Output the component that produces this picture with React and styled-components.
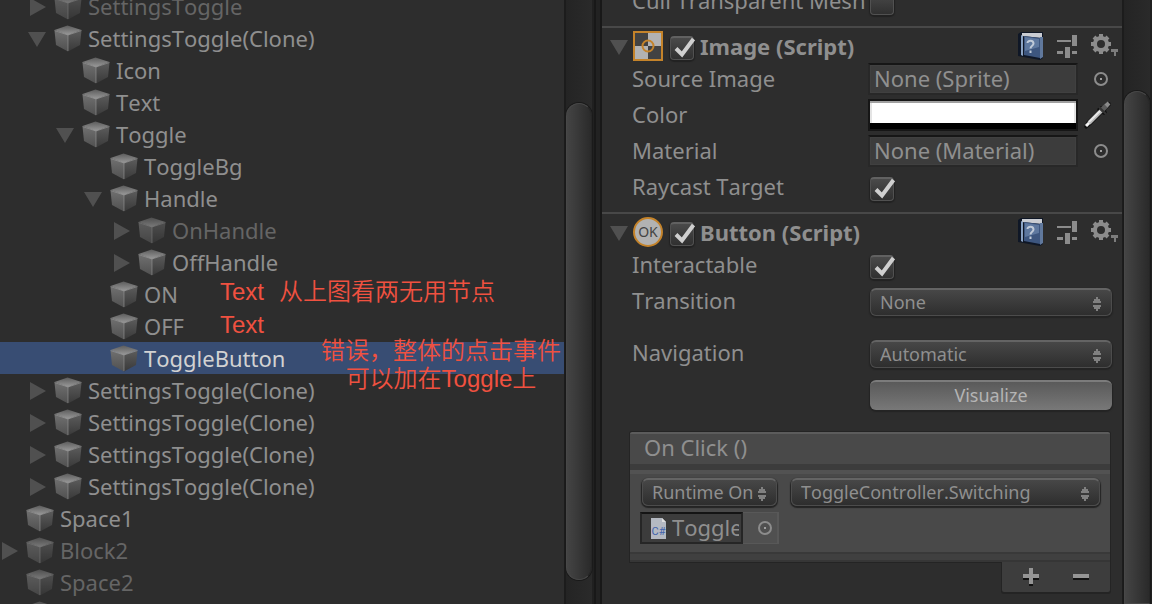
import React, { useId, useState } from "react";
import styled, { createGlobalStyle, css } from "styled-components";

const Global = createGlobalStyle`
  * { box-sizing: border-box; }
  body {
    margin: 0;
    background: #2d2d2d;
    color: #8f8f8f;
    font: 22px/32px "Noto Sans", "Noto Sans CJK SC", sans-serif;
    font-kerning: none;
  }
  button, input, select { font: inherit; font-kerning: inherit; color: inherit; margin: 0; }
`;

const bare = css`
  appearance: none;
  border: 0;
  padding: 0;
  background: none;
`;

const Editor = styled.main`
  display: grid;
  grid-template-columns: 564fr 30px 8px 520fr 30px;
  height: 100vh;
  overflow: hidden;
`;

/* ---------- hierarchy ---------- */

const Hierarchy = styled.section`
  position: relative;
  overflow: hidden;
  min-width: 0;
`;

const Tree = styled.ul`
  list-style: none;
  margin: -10px 0 0;
  padding: 0;
`;

const TreeRow = styled.li`
  display: flex;
  align-items: center;
  height: 32px;
  padding-left: ${(p) => p.$depth * 28}px;
  white-space: nowrap;
  color: ${(p) => (p.$selected ? "#d2d2d2" : p.$dim ? "#656565" : "#8f8f8f")};
  background: ${(p) => (p.$selected ? "#384d73" : "transparent")};
`;

const Fold = styled.button`
  ${bare}
  display: block;
  width: 18px;
  height: 18px;
  margin-top: 2px;
  svg { display: block; }
`;

const FoldSlot = styled.span`
  flex: none;
  width: 26px;
`;

const CubeSvg = styled.svg`
  flex: none;
  margin: 1px 6px 0 0;
  opacity: ${(p) => (p.$dim ? 0.7 : 1)};
`;

const Note = styled.p`
  position: absolute;
  margin: 0;
  left: ${(p) => p.$x}px;
  top: ${(p) => p.$y}px;
  color: #f05140;
  font: 24px/28px "Liberation Sans", "Noto Sans CJK SC", sans-serif;
  font-kerning: normal;
  font-weight: ${(p) => (p.$light ? 350 : 400)};
  text-align: center;
  white-space: pre;
`;

/* ---------- scroll bars ---------- */

const Track = styled.div`
  display: grid;
  grid-template-rows: ${(p) => p.$rows};
  padding: 0 2px;
  background: linear-gradient(90deg, #1c1c1c 0 2px, #242424 2px, #2a2a2a 28px, #202020 28px);
`;

const Thumb = styled.div`
  grid-row: 2;
  border: 1px solid #484848;
  border-right-color: #262626;
  border-radius: ${(p) => (p.$open ? "13px 13px 0 0" : "13px")};
  box-shadow: 0 0 0 1px #1a1a1a;
  background: linear-gradient(90deg, #444, #3a3a3a 40%, #2a2a2a);
`;

const Divider = styled.div`
  border: solid #181818;
  border-width: 0 2px;
  background: #222;
`;

/* ---------- inspector ---------- */

const Inspector = styled.section`
  min-width: 0;
  overflow: hidden;
`;

const Scrolled = styled.div`
  margin-top: -17px;
`;

const Component = styled.section`
  padding-bottom: 7px;
  & + & {
    border-top: 2px solid #484848;
    padding-top: 3px;
  }
`;

const ComponentHead = styled.header`
  display: flex;
  align-items: center;
  height: 30px;
  padding: 0 4px 0 8px;
`;

const ComponentIcon = styled.svg`
  flex: none;
  margin: 0 7px 0 5px;
`;

const ComponentTitle = styled.h2`
  flex: 1;
  margin: 0 0 0 4px;
  font-size: 22px;
  line-height: 30px;
  font-weight: 700;
  white-space: nowrap;
`;

const Tools = styled.div`
  display: flex;
  align-items: center;
  gap: 12px;
`;

const IconButton = styled.button`
  ${bare}
  display: grid;
  place-items: center;
  svg { display: block; }
`;

const Property = styled.div`
  display: grid;
  grid-template-columns: 236px 1fr;
  align-items: center;
  height: 36px;
  margin-top: ${(p) => p.$gap || 0}px;
  padding: 0 10px 0 30px;
`;

const PropertyLabel = styled.label`
  margin-top: -2px;
  white-space: nowrap;
`;

const Value = styled.div`
  display: grid;
  grid-template-columns: 1fr 34px;
  align-items: center;
  > button { justify-self: end; }
`;

const Control = styled.div`
  padding-left: 2px;
`;

const Field = styled.input`
  ${bare}
  width: 100%;
  min-width: 0;
  height: 32px;
  padding: 0 4px 2px;
  border: 2px solid #282828;
  border-top-color: #161616;
  background: #3c3c3c;
  box-shadow: inset 0 0 0 1px #404040;
`;

const ColorField = styled.input`
  ${bare}
  width: 100%;
  height: 32px;
  border: 2px solid #161616;
  &::-webkit-color-swatch-wrapper { padding: 0; }
  &::-webkit-color-swatch {
    border: 0;
    border-bottom: 6px solid #000;
    border-radius: 0;
    box-shadow: inset 0 2px #a0a0a0, inset 2px 0 #e4e4e4, inset -2px 0 #e4e4e4;
  }
`;

const CheckWrap = styled.span`
  display: grid;
  flex: none;
  width: 26px;
  height: 24px;
  margin-top: 4px;
  > * { grid-area: 1 / 1; }
  svg { pointer-events: none; }
`;

const CheckBox = styled.input`
  ${bare}
  width: 24px;
  height: 24px;
  border: 1px solid #515151;
  border-top: 2px solid #616161;
  border-radius: 4px;
  background: linear-gradient(#4a4a4a, #303030);
  box-shadow: 0 1px 1px 1px #222;
`;

const SelectWrap = styled.span`
  display: grid;
  grid-template-columns: minmax(0, 1fr) 19px;
  align-items: center;
  height: 28px;
  margin-top: 2px;
  border: 1px solid #4c4c4c;
  border-top: 2px solid #646464;
  border-radius: 6px;
  background: linear-gradient(#474747, #2e2e2e);
  box-shadow: 0 1px 1px 1px #242424;
  svg { grid-area: 1 / 2; margin-top: 2px; pointer-events: none; }
`;

const Select = styled.select`
  ${bare}
  grid-area: 1 / 1;
  align-self: start;
  width: calc(100% - 4px);
  height: 24px;
  padding-left: 9px;
  font-size: 18px;
  line-height: 24px;
  text-overflow: clip;
`;

const PushButton = styled.button`
  ${bare}
  display: block;
  width: 100%;
  height: 30px;
  padding-bottom: 2px;
  border-top: 2px solid #7c7c7c;
  border-radius: 6px;
  background: linear-gradient(#5a5a5a, #787878);
  box-shadow: 0 1px 1px 1px #242424;
  color: #b4b4b4;
  font-size: 18px;
  line-height: 24px;
`;

/* ---------- event list ---------- */

const EventBox = styled.section`
  margin: 19px 12px 0 28px;
  background: #494949;
  border-top: 2px solid #5c5c5c;
  border-bottom: 2px solid #363636;
  border-radius: 2px 2px 0 0;
  box-shadow: 0 0 0 1px #242424;
`;

const EventTitle = styled.h3`
  margin: 0;
  padding: 0 14px;
  height: 36px;
  border-bottom: 6px solid #3c3c3c;
  font-size: 22px;
  line-height: 26px;
  font-weight: 400;
`;

const EventEntry = styled.div`
  display: grid;
  gap: 6px;
  height: 84px;
  padding: 4px 10px;
  align-content: start;
  border-top: 4px solid #525252;
  border-bottom: 2px solid #393939;
`;

const EventSelects = styled.div`
  display: grid;
  grid-template-columns: 135px 1fr;
  gap: 14px;
  padding-left: 2px;
  margin-top: -2px;
`;

const ObjectSlot = styled.div`
  display: flex;
  width: 139px;
  height: 32px;
  background: #505050;
  border: 1px solid #585858;
  border-width: 1px 2px 1px 0;
`;

const ObjectField = styled.div`
  display: flex;
  align-items: center;
  flex: none;
  width: 103px;
  height: 32px;
  margin: -1px 0;
  padding: 0 2px 0 9px;
  border: 2px solid #262626;
  border-top-color: #141414;
  background: #3c3c3c;
`;

const ObjectName = styled.input`
  ${bare}
  flex: 1;
  min-width: 0;
  height: 28px;
  padding-bottom: 2px;
  margin-left: 6px;
`;

const SlotPicker = styled.div`
  display: grid;
  flex: 1;
  padding-left: 10px;
`;

const EventGutter = styled.div`
  height: 6px;
  background: #404040;
`;

const EventFooter = styled.div`
  display: grid;
  grid-template-columns: 1fr 1fr;
  position: relative;
  width: 108px;
  height: 30px;
  margin: 0 12px 0 auto;
  padding: 0 4px;
  border-radius: 0 0 2px 2px;
  background: #3d3d3d;
  box-shadow: 0 1px 0 1px #242424;
  clip-path: inset(0 -3px -3px -3px);
`;

/* ---------- drawings ---------- */

function Triangle({ open }) {
  return (
    <svg width="18" height="18" fill="#505050">
      <path d={open ? "M0 2H18L9 17Z" : "M2 0V18L18 9Z"} />
    </svg>
  );
}

function Cube({ dim }) {
  const id = useId();
  return (
    <CubeSvg width="28" height="27" $dim={dim} aria-hidden="true">
      <defs>
        <linearGradient id={id + "t"} x2="0" y2="1">
          <stop stopColor="#5c5c5c" /><stop offset="1" stopColor="#9a9a9a" />
        </linearGradient>
        <linearGradient id={id + "l"} x2="0" y2="1">
          <stop stopColor="#707070" /><stop offset="1" stopColor="#505050" />
        </linearGradient>
        <linearGradient id={id + "r"} x2="0" y2="1">
          <stop stopColor="#5c5c5c" /><stop offset="1" stopColor="#393939" />
        </linearGradient>
      </defs>
      <path d="M.5 5.5L14 9.5V26.500L2 20Z" fill={`url(#${id}l)`} />
      <path d="M27.500 5.500L14 9.500V26.500L26 20Z" fill={`url(#${id}r)`} />
      <path d="M.5 5L13.500.5L27.500 5L14 10Z" fill={`url(#${id}t)`} />
      <path d="M.5 5.500L14 10L27.500 5.500M14 10V26" fill="none" stroke="#a0a0a0" strokeWidth=".8" opacity=".7" />
    </CubeSvg>
  );
}

function Tick() {
  return (
    <svg width="26" height="24" fill="none" stroke="#cfcfcf" strokeWidth="4">
      <path d="M6 12.500L12 18.500L23.500 3" />
    </svg>
  );
}

function UpDown() {
  return (
    <svg width="10" height="14" fill="#808080">
      <path d="M4 0H6V2H8V4H9V6H1V4H2V2H4ZM1 8H9V10H8V12H6V14H4V12H2V10H1Z" />
    </svg>
  );
}

function Target() {
  return (
    <svg width="22" height="16" fill="none" stroke="#8c8c8c" strokeWidth="2">
      <circle cx="11" cy="8" r="6" />
      <rect x="10" y="7" width="2" height="2" fill="#a0a0a0" stroke="none" />
    </svg>
  );
}

function Dropper() {
  return (
    <svg width="28" height="28">
      <path d="M0 26L3 20L14 10L13 8L17 5L19 6L22 2L26 1L27 4L22 9L23 12L20 14L18 13L7 24L2 28Z" fill="#101010" />
      <path d="M2 25L6 21" stroke="#f4f4f4" strokeWidth="3" />
      <path d="M5 22L17 10" stroke="#b8b8b8" strokeWidth="4" />
      <path d="M5 21L16 10" stroke="#e8e8e8" strokeWidth="2" />
      <path d="M17 10L23 4" stroke="#5c5c5c" strokeWidth="5" />
      <path d="M22 5L25 2" stroke="#8a8a8a" strokeWidth="4" />
      <path d="M15 6L22 13" stroke="#333" strokeWidth="2" />
    </svg>
  );
}

function Book() {
  return (
    <svg width="26" height="28">
      <path d="M0 2L3 0H25V26L22 28L0 24Z" fill="#0f1726" />
      <path d="M4 1H24V6L4 4Z" fill="#c9ccd2" />
      <path d="M22 5H25V25L22 27Z" fill="#60789c" />
      <path d="M3 3L5 4V24L3 23Z" fill="#8ba3c4" />
      <path d="M6 4L22 6V26L6 23Z" fill="#3d567f" />
      <path d="M7 5L21 7V15L7 19Z" fill="#6681a8" opacity=".8" />
      <path d="M9.500 11C9.500 8 15.500 8 15.500 11.500C15.500 14 12.500 13.500 12.500 16.500M12.500 18.500V21" fill="none" stroke="#c0cad8" strokeWidth="2" />
    </svg>
  );
}

function Sliders() {
  return (
    <svg width="22" height="26" fill="#8c8c8c">
      <path d="M1 7H15V9H1ZM16 2H21V13H16ZM1 18H7V21H1ZM9 14H14V25H9ZM16 18H21V21H16Z" />
    </svg>
  );
}

function Gear() {
  return (
    <svg width="28" height="26">
      <g fill="none" stroke="#8c8c8c" strokeWidth="4">
        <circle cx="11" cy="11" r="6" />
        <path d="M11 1V5M11 17V21M1 11H5M17 11H21M4 4L7 7M15 15L18 18M4 18L7 15M15 7L18 4" />
      </g>
      <path d="M21 16H28V19H26V23H24V19H21Z" fill="#7c7c7c" />
    </svg>
  );
}

function ImageGlyph() {
  return (
    <ComponentIcon width="30" height="30" aria-hidden="true">
      <path d="M0 0H30V30H0Z" fill="#b2b2b2" />
      <path d="M0 0H15V15H0ZM15 15H30V30H15Z" fill="#424242" />
      <rect x="1" y="1" width="28" height="28" fill="none" stroke="#c4832a" strokeWidth="2" />
      <circle cx="15" cy="15" r="5.500" fill="none" stroke="#c4832a" strokeWidth="2" />
    </ComponentIcon>
  );
}

function ButtonGlyph() {
  return (
    <ComponentIcon width="30" height="30" aria-hidden="true">
      <circle cx="15" cy="15" r="14" fill="#b2b2b2" stroke="#c4832a" strokeWidth="2" />
      <text x="15" y="20" textAnchor="middle" fontSize="14" fill="#444" fontFamily="Noto Sans">OK</text>
    </ComponentIcon>
  );
}

function ScriptGlyph() {
  return (
    <svg width="15" height="21">
      <path d="M0 0H11L15 4V21H0Z" fill="#b4b9c2" />
      <path d="M11 0V4H15Z" fill="#e0e0e0" />
      <text x="7.500" y="17" textAnchor="middle" fontSize="11" fill="#4263ac" fontFamily="Roboto">C#</text>
    </svg>
  );
}

/* ---------- parts ---------- */

function Check({ id, on = true, label }) {
  const [checked, setChecked] = useState(on);
  return (
    <CheckWrap>
      <CheckBox id={id} type="checkbox" aria-label={label} checked={checked} onChange={(e) => setChecked(e.target.checked)} />
      {checked && <Tick />}
    </CheckWrap>
  );
}

function Popup({ id, value, label }) {
  return (
    <SelectWrap>
      <Select id={id} aria-label={label} defaultValue={value}>
        <option>{value}</option>
      </Select>
      <UpDown />
    </SelectWrap>
  );
}

function Head({ glyph, title }) {
  return (
    <ComponentHead>
      <Fold aria-label={`Collapse ${title}`}><Triangle open /></Fold>
      {glyph}
      <Check label={`Enable ${title}`} />
      <ComponentTitle>{title}</ComponentTitle>
      <Tools>
        <IconButton aria-label="Help"><Book /></IconButton>
        <IconButton aria-label="Presets"><Sliders /></IconButton>
        <IconButton aria-label="Options"><Gear /></IconButton>
      </Tools>
    </ComponentHead>
  );
}

const nodes = [
  { name: "SettingsToggle", depth: 1, fold: "closed", dim: true },
  { name: "SettingsToggle(Clone)", depth: 1, fold: "open" },
  { name: "Icon", depth: 2 },
  { name: "Text", depth: 2 },
  { name: "Toggle", depth: 2, fold: "open" },
  { name: "ToggleBg", depth: 3 },
  { name: "Handle", depth: 3, fold: "open" },
  { name: "OnHandle", depth: 4, fold: "closed", dim: true },
  { name: "OffHandle", depth: 4, fold: "closed" },
  { name: "ON", depth: 3 },
  { name: "OFF", depth: 3 },
  { name: "ToggleButton", depth: 3, selected: true },
  { name: "SettingsToggle(Clone)", depth: 1, fold: "closed" },
  { name: "SettingsToggle(Clone)", depth: 1, fold: "closed" },
  { name: "SettingsToggle(Clone)", depth: 1, fold: "closed" },
  { name: "SettingsToggle(Clone)", depth: 1, fold: "closed" },
  { name: "Space1", depth: 0 },
  { name: "Block2", depth: 0, fold: "closed", dim: true },
  { name: "Space2", depth: 0, dim: true },
  { name: "", depth: 0, dim: true },
];

export default function App() {
  return (
    <>
      <Global />
      <Editor>
        <Hierarchy>
          <Tree>
            {nodes.map((n, i) => (
              <TreeRow key={i} $depth={n.depth} $dim={n.dim} $selected={n.selected}>
                <FoldSlot>
                  {n.fold && <Fold aria-label={`Toggle ${n.name}`}><Triangle open={n.fold === "open"} /></Fold>}
                </FoldSlot>
                <Cube dim={n.dim} />
                {n.name}
              </TreeRow>
            ))}
          </Tree>
          <Note $x={220} $y={278}>Text</Note>
          <Note $x={279} $y={278} $light>从上图看两无用节点</Note>
          <Note $x={220} $y={311}>Text</Note>
          <Note $x={321} $y={337} $light>{"错误，整体的点击事件\n可以加在Toggle上"}</Note>
        </Hierarchy>

        <Track $rows="17fr 79fr 4fr"><Thumb /></Track>
        <Divider />

        <Inspector>
          <Scrolled>
            <Component>
              <Property>
                <PropertyLabel htmlFor="cull">Cull Transparent Mesh</PropertyLabel>
                <Control><Check id="cull" on={false} /></Control>
              </Property>
            </Component>

            <Component>
              <Head glyph={<ImageGlyph />} title="Image (Script)" />
              <Property>
                <PropertyLabel htmlFor="sprite">Source Image</PropertyLabel>
                <Value>
                  <Field id="sprite" readOnly value="None (Sprite)" />
                  <IconButton aria-label="Pick sprite"><Target /></IconButton>
                </Value>
              </Property>
              <Property>
                <PropertyLabel htmlFor="color">Color</PropertyLabel>
                <Value>
                  <ColorField id="color" type="color" defaultValue="#ffffff" />
                  <IconButton aria-label="Pick color from screen"><Dropper /></IconButton>
                </Value>
              </Property>
              <Property>
                <PropertyLabel htmlFor="material">Material</PropertyLabel>
                <Value>
                  <Field id="material" readOnly value="None (Material)" />
                  <IconButton aria-label="Pick material"><Target /></IconButton>
                </Value>
              </Property>
              <Property>
                <PropertyLabel htmlFor="raycast">Raycast Target</PropertyLabel>
                <Control><Check id="raycast" /></Control>
              </Property>
            </Component>

            <Component>
              <Head glyph={<ButtonGlyph />} title="Button (Script)" />
              <Property>
                <PropertyLabel htmlFor="interactable">Interactable</PropertyLabel>
                <Control><Check id="interactable" /></Control>
              </Property>
              <Property>
                <PropertyLabel htmlFor="transition">Transition</PropertyLabel>
                <Control><Popup id="transition" value="None" /></Control>
              </Property>
              <Property $gap={16}>
                <PropertyLabel htmlFor="navigation">Navigation</PropertyLabel>
                <Control><Popup id="navigation" value="Automatic" /></Control>
              </Property>
              <Property $gap={6}>
                <span />
                <Control><PushButton>Visualize</PushButton></Control>
              </Property>

              <EventBox>
                <EventTitle>On Click ()</EventTitle>
                <EventEntry>
                  <EventSelects>
                    <Popup label="Call state" value="Runtime Only" />
                    <Popup label="Function" value="ToggleController.Switching" />
                  </EventSelects>
                  <ObjectSlot>
                    <ObjectField>
                      <ScriptGlyph />
                      <ObjectName aria-label="Target object" readOnly value="ToggleController" />
                    </ObjectField>
                    <SlotPicker>
                      <IconButton aria-label="Pick object"><Target /></IconButton>
                    </SlotPicker>
                  </ObjectSlot>
                </EventEntry>
                <EventGutter />
              </EventBox>
              <EventFooter>
                <IconButton aria-label="Add">
                  <svg width="16" height="18"><path d="M6 2H10V8H16V12H10V18H6V12H0V8H6Z" fill="#111" /><path d="M6 0H10V6H16V10H10V16H6V10H0V6H6Z" fill="#959595" /></svg>
                </IconButton>
                <IconButton aria-label="Remove">
                  <svg width="16" height="6"><path d="M0 2H16V6H0Z" fill="#111" /><path d="M0 0H16V4H0Z" fill="#959595" /></svg>
                </IconButton>
              </EventFooter>
            </Component>
          </Scrolled>
        </Inspector>

        <Track $rows="15fr 85fr"><Thumb $open /></Track>
      </Editor>
    </>
  );
}
